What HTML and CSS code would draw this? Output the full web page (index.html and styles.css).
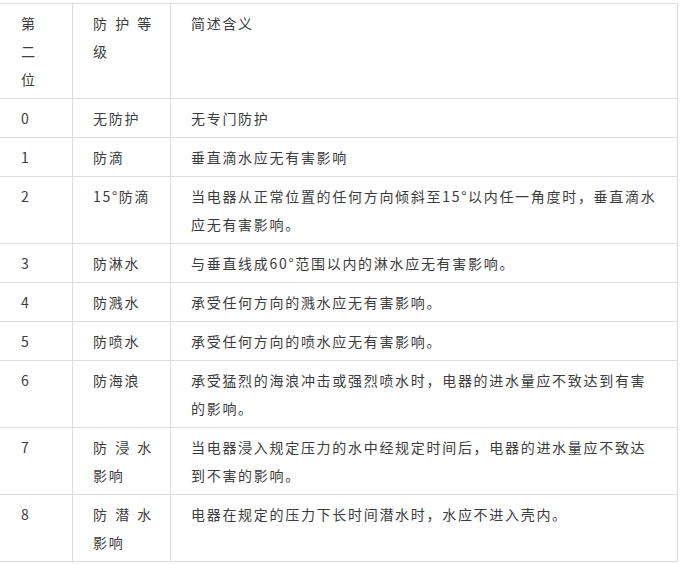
FILE: index.html
```html
<!DOCTYPE html>
<html lang="zh-CN">
<head>
<meta charset="utf-8">
<link rel="stylesheet" href="styles.css">
</head>
<body>
<table class="ip-table">
  <colgroup>
    <col class="c1">
    <col class="c2">
    <col class="c3">
  </colgroup>
  <tr><td class="first">第二位</td><td class="just">防护等级</td><td>简述含义</td></tr>
  <tr><td class="first">0</td><td>无防护</td><td>无专门防护</td></tr>
  <tr><td class="first">1</td><td>防滴</td><td>垂直滴水应无有害影响</td></tr>
  <tr><td class="first">2</td><td>15°防滴</td><td>当电器从正常位置的任何方向倾斜至15°以内任一角度时，垂直滴水应无有害影响。</td></tr>
  <tr><td class="first">3</td><td>防淋水</td><td>与垂直线成60°范围以内的淋水应无有害影响。</td></tr>
  <tr><td class="first">4</td><td>防溅水</td><td>承受任何方向的溅水应无有害影响。</td></tr>
  <tr><td class="first">5</td><td>防喷水</td><td>承受任何方向的喷水应无有害影响。</td></tr>
  <tr><td class="first">6</td><td>防海浪</td><td>承受猛烈的海浪冲击或强烈喷水时，电器的进水量应不致达到有害的影响。</td></tr>
  <tr><td class="first">7</td><td class="just">防浸水影响</td><td>当电器浸入规定压力的水中经规定时间后，电器的进水量应不致达到不害的影响。</td></tr>
  <tr><td class="first">8</td><td class="just">防潜水影响</td><td>电器在规定的压力下长时间潜水时，水应不进入壳内。</td></tr>
</table>
</body>
</html>
```
FILE: styles.css
```css
html, body {
  margin: 0;
  padding: 0;
  background: #fff;
}
body {
  overflow: hidden;
}
.ip-table {
  border-collapse: collapse;
  table-layout: fixed;
  width: 678px;
  margin: 3px 0 0 -1px;
  font-family: "Noto Sans CJK SC", "Microsoft YaHei", sans-serif;
  font-size: 14px;
  line-height: 28px;
  letter-spacing: 1.7px;
  color: #3c3c3c;
  text-spacing-trim: space-all;
}
.c1 { width: 73px; }
.c2 { width: 98px; }
.c3 { width: 507px; }
.ip-table td {
  border: 1px solid #ddd;
  padding: 5px 17px 5px 20px;
  vertical-align: top;
  text-align: left;
  word-break: break-all;
}
.ip-table td.first {
  padding-left: 21px;
  padding-right: 22px;
}
.ip-table td.just {
  text-align: justify;
  text-align-last: left;
}
```
